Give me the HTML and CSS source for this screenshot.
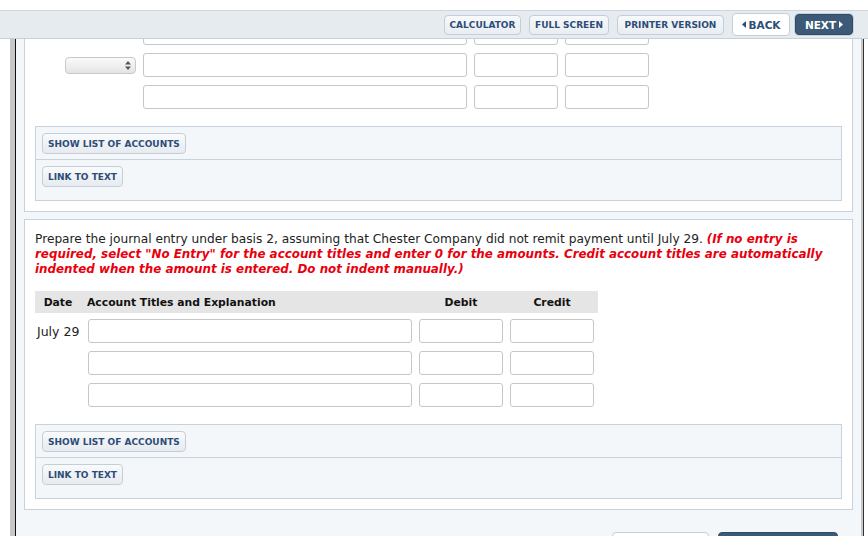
FILE: index.html
```html
<!DOCTYPE html>
<html lang="en">

<head>
    <meta charset="UTF-8">
    <meta name="viewport" content="width=device-width, initial-scale=1.0">
    <title>Journal Entry</title>
    <link rel="stylesheet" href="styles.css">
</head>

<body>
    <div class="top-gap"></div>

    <div class="toolbar">
        <button class="tool-btn calc-btn">CALCULATOR</button>
        <button class="tool-btn full-btn">FULL SCREEN</button>
        <button class="tool-btn print-btn">PRINTER VERSION</button>
        <button class="nav-btn back-btn">
            <svg width="4" height="7" viewBox="0 0 4 7"><path d="M4 0 L0 3.5 L4 7 Z" fill="#2d4d78"/></svg>BACK
        </button>
        <button class="nav-btn next-btn">
            NEXT<svg width="4" height="7" viewBox="0 0 4 7"><path d="M0 0 L4 3.5 L0 7 Z" fill="#ffffff"/></svg>
        </button>
    </div>

    <div class="frame">
        <div class="frame-inner">

            <div class="card card-cut">
                <div class="entry-grid first-grid">
                    <div class="date-cell"></div>
                    <input type="text" class="acct-input">
                    <input type="text" class="amt-input">
                    <input type="text" class="amt-input">

                    <div class="date-cell">
                        <span class="fake-select">
                            <svg width="6" height="9" viewBox="0 0 6 9">
                                <path d="M3 0 L6 3.5 L0 3.5 Z M3 9 L6 5.5 L0 5.5 Z" fill="#555"/>
                            </svg>
                        </span>
                    </div>
                    <input type="text" class="acct-input">
                    <input type="text" class="amt-input">
                    <input type="text" class="amt-input">

                    <div class="date-cell"></div>
                    <input type="text" class="acct-input">
                    <input type="text" class="amt-input">
                    <input type="text" class="amt-input">
                </div>

                <div class="tools-panel">
                    <div class="tools-row">
                        <button class="small-btn">SHOW LIST OF ACCOUNTS</button>
                    </div>
                    <div class="tools-row tools-row-last">
                        <button class="small-btn">LINK TO TEXT</button>
                    </div>
                </div>
            </div>

            <div class="card">
                <p class="prompt">
                    Prepare the journal entry under basis 2, assuming that Chester Company did not remit payment until July 29.
                    <em class="note">(If no entry is required, select "No Entry" for the account titles and enter 0 for the amounts. Credit account titles are automatically indented when the amount is entered. Do not indent manually.)</em>
                </p>

                <div class="journal-head">
                    <span class="col-date">Date</span>
                    <span class="col-acct">Account Titles and Explanation</span>
                    <span class="col-amt">Debit</span>
                    <span class="col-amt">Credit</span>
                </div>

                <div class="entry-grid second-grid">
                    <div class="date-label">July 29</div>
                    <input type="text" class="acct-input">
                    <input type="text" class="amt-input">
                    <input type="text" class="amt-input">

                    <div></div>
                    <input type="text" class="acct-input">
                    <input type="text" class="amt-input">
                    <input type="text" class="amt-input">

                    <div></div>
                    <input type="text" class="acct-input">
                    <input type="text" class="amt-input">
                    <input type="text" class="amt-input">
                </div>

                <div class="tools-panel">
                    <div class="tools-row">
                        <button class="small-btn">SHOW LIST OF ACCOUNTS</button>
                    </div>
                    <div class="tools-row tools-row-last">
                        <button class="small-btn">LINK TO TEXT</button>
                    </div>
                </div>
            </div>

            <div class="footer-nav">
                <button class="foot-btn foot-light"></button>
                <button class="foot-btn foot-dark"></button>
            </div>

        </div>
    </div>
</body>

</html>
```

FILE: styles.css
```css
body {
    margin: 0;
    padding: 0;
    background: #ffffff;
    font-family: "DejaVu Sans", Verdana, sans-serif;
    color: #222222;
    overflow: hidden;
}

.top-gap {
    height: 10px;
}

/* toolbar across the top */

.toolbar {
    height: 27px;
    background-color: #e6ebf0;
    border-top: 1px solid #cdd6df;
    border-bottom: 1px solid #c5d0db;
    display: flex;
    justify-content: flex-end;
    align-items: center;
    padding-right: 15px;
    gap: 8px;
}

.tool-btn {
    height: 20px;
    padding: 0;
    font-family: "DejaVu Sans", Verdana, sans-serif;
    font-size: 9px;
    font-weight: bold;
    color: #2d4d78;
    background: linear-gradient(#f7f9fb, #e9edf1);
    border: 1px solid #c4ced8;
    border-radius: 4px;
    cursor: pointer;
}

.calc-btn {
    width: 77px;
}

.full-btn {
    width: 80px;
}

.print-btn {
    width: 107px;
}

.nav-btn {
    height: 23px;
    width: 58px;
    font-family: "DejaVu Sans", Verdana, sans-serif;
    font-size: 10.5px;
    font-weight: bold;
    border-radius: 4px;
    display: flex;
    align-items: center;
    justify-content: center;
    gap: 3px;
    padding: 0;
    cursor: pointer;
}

.back-btn {
    color: #2d4d78;
    background: #ffffff;
    border: 1px solid #c4ced8;
}

.next-btn {
    height: 21px;
    margin-left: -3px;
    color: #ffffff;
    background: #3c5a77;
    border: 1px solid #2f4b66;
    box-shadow: 0 0 0 1px #c9d3dd;
}

/* page frame */

.frame {
    height: 497px;
    margin: 0 4px 0 10px;
    border-left: 5px solid #c7c7c7;
    border-right: 1px solid #333333;
    overflow: hidden;
}

.frame-inner {
    display: flow-root;
    height: 100%;
    border-left: 1px solid #111111;
    border-right: 2px solid #c7c7c7;
    background-color: #f4f7fa;
    padding: 0 8px;
}

.card {
    background: #ffffff;
    border: 1px solid #c8d2dc;
    padding: 12px 10px 10px 10px;
    margin-bottom: 7px;
}

.card-cut {
    margin-top: -18px;
    border-top: none;
    padding-top: 0;
}

/* entry rows */

.entry-grid {
    display: grid;
    row-gap: 8px;
    column-gap: 7px;
    align-items: center;
}

.first-grid {
    grid-template-columns: 101px 324px 84px 84px;
}

.second-grid {
    grid-template-columns: 46px 324px 84px 84px;
    margin-top: 6px;
}

.acct-input,
.amt-input {
    box-sizing: border-box;
    height: 24px;
    width: 100%;
    margin: 0;
    border: 1px solid #c6c6c6;
    border-radius: 3px;
    background: #ffffff;
}

.date-cell {
    display: flex;
    justify-content: flex-end;
}

.fake-select {
    box-sizing: border-box;
    width: 71px;
    height: 17px;
    border: 1px solid #c9c9c9;
    border-radius: 4px;
    background: linear-gradient(#fafafa, #e4e4e4);
    display: flex;
    justify-content: flex-end;
    align-items: center;
    padding-right: 4px;
}

.date-label {
    font-size: 12.5px;
    padding-left: 2px;
    color: #222222;
}

/* prompt text */

.prompt {
    margin: 0 0 14px 0;
    font-size: 12.2px;
    line-height: 15px;
}

.note {
    color: #e8000d;
    font-weight: bold;
    font-size: 11.9px;
}

/* journal header */

.journal-head {
    display: grid;
    grid-template-columns: 46px 324px 84px 84px;
    column-gap: 7px;
    width: 559px;
    padding-right: 4px;
    height: 22px;
    align-items: center;
    background-color: #e5e5e5;
    font-size: 10.8px;
    font-weight: bold;
    color: #111111;
}

.col-date {
    text-align: center;
}

.col-acct {
    margin-left: -1px;
}

.col-amt {
    text-align: center;
}

/* grey tool panel */

.tools-panel {
    margin-top: 17px;
    background-color: #f4f7fa;
    border: 1px solid #c8d2dc;
}

.tools-row {
    display: flex;
    align-items: flex-start;
    padding: 6px 6px 5px 6px;
    border-bottom: 1px solid #c8d2dc;
}

.tools-row-last {
    border-bottom: none;
    padding-bottom: 13px;
}

.small-btn {
    height: 21px;
    padding: 0 5px;
    font-family: "DejaVu Sans", Verdana, sans-serif;
    font-size: 9px;
    font-weight: bold;
    color: #2d4d78;
    background: linear-gradient(#f9fafb, #e7ebef);
    border: 1px solid #c4ced8;
    border-radius: 4px;
    cursor: pointer;
}

/* bottom buttons, mostly below the fold */

.footer-nav {
    display: flex;
    justify-content: flex-end;
    align-items: flex-start;
    gap: 9px;
    padding-top: 15px;
    padding-right: 15px;
}

.foot-btn {
    height: 26px;
    border-radius: 4px;
}

.foot-light {
    width: 97px;
    background: #ffffff;
    border: 1px solid #c4ced8;
}

.foot-dark {
    width: 120px;
    background: #3c5a77;
    border: 1px solid #2f4b66;
}
```
